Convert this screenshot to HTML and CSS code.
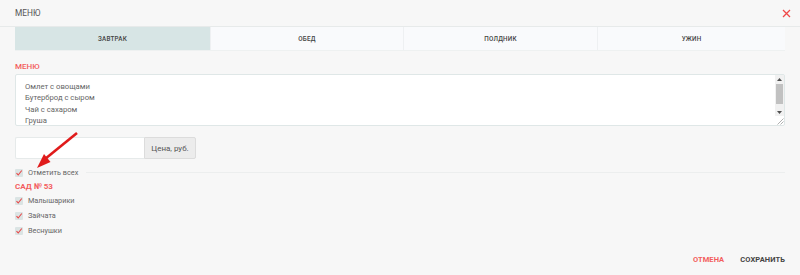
FILE: index.html
```html
<!DOCTYPE html>
<html lang="ru">
<head>
<meta charset="utf-8">
<link rel="stylesheet" href="styles.css">
</head>
<body>
<div class="modal">
  <div class="header">
    <span class="title">МЕНЮ</span>
    <svg class="close" width="9" height="9" viewBox="0 0 9 9"><path d="M1 1 L8 8 M8 1 L1 8" stroke="#f04848" stroke-width="1.25" fill="none"/></svg>
  </div>
  <div class="content">
    <div class="tabs">
      <div class="tab active">ЗАВТРАК</div>
      <div class="tab">ОБЕД</div>
      <div class="tab">ПОЛДНИК</div>
      <div class="tab">УЖИН</div>
    </div>
    <div class="label">МЕНЮ</div>
    <div class="ta-wrap">
      <textarea class="menu-text">Омлет с овощами
Бутерброд с сыром
Чай с сахаром
Груша
Яблоко
Компот
Печенье
Сок</textarea>
      <div class="sb">
        <div class="sb-btn"><svg width="5" height="3" viewBox="0 0 5 3"><path d="M0 3 L2.5 0 L5 3 Z" fill="#505050"/></svg></div>
        <div class="sb-thumb"></div>
        <div class="sb-space"></div>
        <div class="sb-btn"><svg width="5" height="3" viewBox="0 0 5 3"><path d="M0 0 L2.5 3 L5 0 Z" fill="#505050"/></svg></div>
      </div>
      <svg class="grip" width="9" height="9" viewBox="0 0 9 9"><path d="M8.5 2.5 L2.5 8.5 M8.5 5.5 L5.5 8.5" stroke="#a8a8a8" stroke-width="0.9" fill="none"/></svg>
    </div>
    <div class="input-group">
      <input class="price" type="text">
      <span class="addon">Цена, руб.</span>
    </div>
    <div class="check-row all">
      <span class="cb"><svg width="8" height="8" viewBox="0 0 8 8"><path d="M1.5 4.2 L3.2 6 L6.8 1.5" stroke="#e84a4a" stroke-width="1.1" fill="none"/></svg></span>
      <span class="cb-text">Отметить всех</span>
      <span class="line"></span>
    </div>
    <div class="label group">САД № 53</div>
    <div class="check-row">
      <span class="cb"><svg width="8" height="8" viewBox="0 0 8 8"><path d="M1.5 4.2 L3.2 6 L6.8 1.5" stroke="#e84a4a" stroke-width="1.1" fill="none"/></svg></span>
      <span class="cb-text">Малышарики</span>
    </div>
    <div class="check-row">
      <span class="cb"><svg width="8" height="8" viewBox="0 0 8 8"><path d="M1.5 4.2 L3.2 6 L6.8 1.5" stroke="#e84a4a" stroke-width="1.1" fill="none"/></svg></span>
      <span class="cb-text">Зайчата</span>
    </div>
    <div class="check-row">
      <span class="cb"><svg width="8" height="8" viewBox="0 0 8 8"><path d="M1.5 4.2 L3.2 6 L6.8 1.5" stroke="#e84a4a" stroke-width="1.1" fill="none"/></svg></span>
      <span class="cb-text">Веснушки</span>
    </div>
    <div class="footer">
      <span class="btn cancel">ОТМЕНА</span>
      <span class="btn save">СОХРАНИТЬ</span>
    </div>
  </div>
  <svg class="arrow" width="50" height="42" viewBox="0 0 50 42"><path d="M44 2 L12 28" stroke="#e01b1b" stroke-width="2.6" fill="none"/><path d="M4 37 L11 23 L17.5 31 Z" fill="#e01b1b"/></svg>
</div>
</body>
</html>
```

FILE: styles.css
```css
* { box-sizing: border-box; }
html, body { margin: 0; padding: 0; }
body {
  background: #f7f7f7;
  font-family: Roboto, "Liberation Sans", sans-serif;
  color: #666;
  width: 800px;
  height: 275px;
  overflow: hidden;
}
.modal { position: relative; }
.header {
  height: 27px;
  border-bottom: 1px solid #e7eaea;
  display: flex;
  align-items: center;
  justify-content: space-between;
  padding: 0 9px 0 15px;
}
.title { font-size: 8.3px; color: #555; margin-top: -1px; }
.close { margin-top: 1px; }
.content { padding: 0 15px; }
.tabs {
  display: grid;
  grid-template-columns: 196px 193px 194px 187px;
  height: 24px;
  background: #f9fafc;
  border-bottom: 1px solid #eef1f1;
}
.tab {
  display: flex;
  align-items: center;
  justify-content: center;
  font-size: 6.3px;
  font-weight: 500;
  color: #444;
  letter-spacing: 0.2px;
  border-right: 1px solid #eef0f2;
}
.tab:last-child { border-right: none; }
.tab.active { background: #d7e5e5; }
.label {
  margin-top: 11px;
  font-size: 8px;
  font-weight: 500;
  color: #f35d5d;
  line-height: 10px;
}
.ta-wrap {
  position: relative;
  margin-top: 2px;
  height: 52px;
}
.menu-text {
  display: block;
  width: 770px;
  height: 52px;
  background: #fff;
  border: 1px solid #dfe7e7;
  border-radius: 2px;
  padding: 6px 20px 4px 9px;
  font-family: Roboto, "Liberation Sans", sans-serif;
  font-size: 7.7px;
  line-height: 11.4px;
  color: #666;
  overflow: hidden;
  resize: none;
  outline: none;
}
.sb {
  position: absolute;
  top: 1px;
  right: 1px;
  width: 9px;
  height: 41px;
  background: #f1f1f1;
  display: flex;
  flex-direction: column;
  align-items: center;
}
.sb-btn {
  height: 8px;
  width: 9px;
  display: flex;
  align-items: center;
  justify-content: center;
}
.sb-thumb {
  width: 7px;
  height: 20px;
  margin-top: 1px;
  background: #c1c1c1;
}
.sb-space { flex: 1; }
.grip {
  position: absolute;
  right: 1px;
  bottom: 1px;
}
.input-group {
  display: flex;
  margin-top: 11px;
  height: 22px;
}
.price {
  width: 129px;
  height: 22px;
  border: 1px solid #e6eaea;
  border-right: none;
  background: #fff;
  border-radius: 2px 0 0 2px;
  outline: none;
}
.addon {
  width: 52px;
  display: flex;
  align-items: center;
  justify-content: center;
  background: #ececec;
  border: 1px solid #dcdcdc;
  border-radius: 0 2px 2px 0;
  font-size: 8px;
  color: #555;
}
.check-row {
  display: flex;
  align-items: center;
  height: 15px;
}
.check-row.all { margin-top: 6px; }
.cb {
  width: 8px;
  height: 8px;
  background: #dbe4e4;
  border-radius: 1px;
  display: flex;
  margin-right: 5px;
}
.cb-text { font-size: 7.3px; color: #666; }
.line {
  flex: 1;
  height: 1px;
  background: #eceeee;
  margin-left: 8px;
}
.label.group { margin-top: 0; height: 13px; line-height: 13px; font-size: 8px; font-weight: 700; }
.footer {
  display: flex;
  justify-content: flex-end;
  align-items: center;
  gap: 16px;
  margin-top: 14px;
  height: 15px;
}
.btn { font-size: 7.5px; font-weight: 700; letter-spacing: 0.1px; }
.cancel { color: #f35d5d; }
.save { color: #444; }
.arrow {
  position: absolute;
  left: 33px;
  top: 131px;
}
```
